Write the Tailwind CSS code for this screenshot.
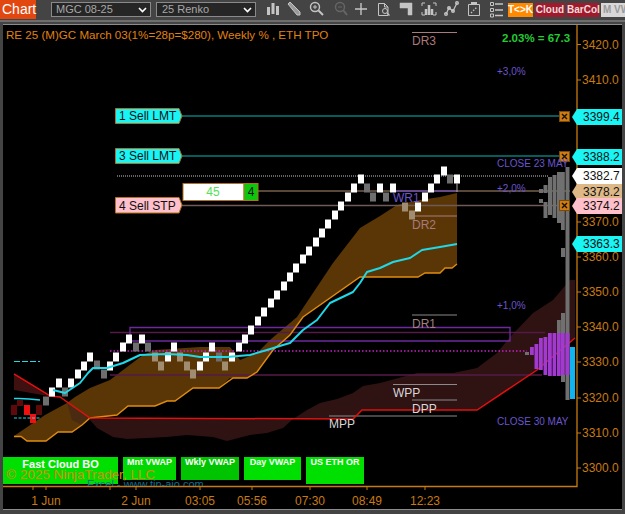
<!DOCTYPE html>
<html>
<head>
<meta charset="utf-8">
<script src="https://cdn.jsdelivr.net/npm/@tailwindcss/browser@4"></script>
</head>
<body class="m-0 w-[625px] h-[514px] overflow-hidden bg-[#444444] font-['Liberation_Sans',Arial,sans-serif] flex flex-col">
<header class="h-[22px] flex items-start shrink-0 relative border-b-2 border-[#6e6e6e]">
  <div class="w-[36px] h-[19px] shrink-0 bg-[#e2470f] text-white text-[14px] leading-[19px] pl-[2px]">Chart</div>
  <div class="ml-[15px] mt-[2px] w-[100px] h-[15px] shrink-0 bg-[#262626] border border-[#8a8a8a] text-[#a8a8a8] text-[11px] leading-[13px] pl-[4px] flex justify-between items-center pr-[3px]"><span>MGC 08-25</span>
    <svg width="9" height="6" viewBox="0 0 9 6"><path d="M1 1l3.500 3.500L8 1" fill="none" stroke="#fff" stroke-width="1.600"/></svg></div>
  <div class="ml-[5px] mt-[2px] w-[100px] h-[15px] shrink-0 bg-[#262626] border border-[#8a8a8a] text-[#a8a8a8] text-[11px] leading-[13px] pl-[5px] flex justify-between items-center pr-[3px]"><span>25 Renko</span>
    <svg width="9" height="6" viewBox="0 0 9 6"><path d="M1 1l3.500 3.500L8 1" fill="none" stroke="#fff" stroke-width="1.600"/></svg></div>
  <svg class="ml-[6px] shrink-0" width="246" height="20" viewBox="262 0 246 20" fill="none" stroke="#c4c4c4" stroke-width="1.400">
    <path d="M268.500 7v8M273 3v11M277.500 6v9" stroke-width="3"/>
    <path d="M288 4l2-2 10 10 0 3-3 0z" fill="#9a9a9a" stroke="#c4c4c4" stroke-width="1"/>
    <circle cx="315" cy="7" r="4.500"/><path d="M318.500 10.500l4.500 4.500" stroke-width="2"/><path d="M313 7h4M315 5v4" stroke-width="1"/>
    <circle cx="340" cy="7" r="4.500" stroke="#666"/><path d="M343.500 10.500l3.500 4.500" stroke="#666" stroke-width="2"/><path d="M338 7h4" stroke="#666" stroke-width="1"/>
    <path d="M355 9h12M361 3v12" />
    <path d="M378.500 3.500h6l3.500 3.500v8.500h-9.500zM384.500 3.500v3.500h3.500" stroke-width="1"/><circle cx="385" cy="11" r="2.500" stroke-width="1"/><path d="M387 13l2.500 2.500" stroke-width="1.200"/>
    <path d="M400 3h12v12h-4V8h-8z" fill="#c4c4c4" stroke-width="0.500"/>
    <path d="M422 6V3h3M436 6V3h-3M422 12v3h3M436 12v3h-3" stroke-width="1"/><path d="M426 15V9M429 15V5M432 15V9" stroke-width="2.500"/>
    <path d="M446 14l3-6 4 3 4-8" stroke-width="1.200"/><circle cx="446" cy="14" r="1.300"/><circle cx="449" cy="8" r="1.300"/><circle cx="453" cy="11" r="1.300"/><circle cx="457" cy="3" r="1.300"/>
    <path d="M468.500 4.500h11v11h-11z" stroke-width="1"/><path d="M471 3h6" stroke-width="2"/><path d="M471 13l6-6" stroke-width="1.300" stroke-dasharray="1.500 1.500"/>
    <path d="M490.500 2.500h3v3h-3zM490.500 8.500h3v3h-3zM490.500 14h3v3h-3z" stroke-width="1"/><path d="M495 4h8M495 10h8M495 15.500h8" stroke-width="1.500"/>
  </svg>
  <div class="mt-[3px] flex font-bold gap-[2px] shrink-0">
    <span class="w-[25px] h-[14px] bg-[#ff8a00] text-white text-center text-[10px] leading-[14px]">T&lt;&gt;K</span>
    <span class="w-[30px] h-[14px] bg-[#a11a2c] text-[#f2dcdc] text-center text-[10px] leading-[14px]">Cloud</span>
    <span class="w-[32px] h-[14px] bg-[#a11a2c] text-[#f2dcdc] text-center text-[10px] leading-[14px]">BarCol</span>
    <span class="w-[25px] h-[14px] bg-[#d8d8d8] text-[#9a9a9a] pl-[2px] text-[10px] leading-[14px] whitespace-nowrap overflow-hidden">M VW</span>
  </div>
</header>
<main class="relative ml-[3px] mt-[2px] w-[619px] h-[486px] bg-black">
<svg class="absolute left-0 top-0" width="619" height="486" viewBox="3 24 619 486" font-size="12">
  <defs><rect id="c" x="-3" y="-4.500" width="6" height="9"/></defs>
  <!-- maroon cloud -->
  <polygon fill="#2f1212" points="90,420 97,428 113,437 127,439 167,437 187,435 213,437 227,441 250,435 267,433 283,428 293,419 307,410 320,403 337,399 353,393 363,386 380,383 417,373 453,373 477,368 497,353 510,337 533,313 553,300 570,280 575,280 575,338 537,370 477,410 362,410 353,419 300,419 90,419"/>
  <polygon fill="#3f1010" points="14,375 14,390 48,396"/>
  <!-- brown cloud -->
  <polygon fill="#5a3606" points="14,436 45,415 67,403 75,397 90,388 110,380 127,367 143,355 155,350 200,347 230,347 240,360 257,353 270,340 297,317 333,263 360,228 380,216 397,205 420,200 440,197 457,193 457,264 452,268 445,268 440,273 425,273 418,277 360,277 303,317 290,335 273,350 257,372 247,378 230,378 219,388 193,388 175,401 167,401 155,406 128,406 117,415 90,418 82,425 72,432 58,432 46,441 27,441 21,436"/>
  <polygon fill="#4a2a10" points="67,403 90,418 82,425 72,420"/>
  <!-- level lines -->
  <g fill="none">
    <path d="M110 332.500H545M110 375H542" stroke="#561a4a" stroke-width="1.300"/>
    <path d="M130 341V327.500H510V341H130" stroke="#6d2a9e" stroke-width="1.300"/>
    <path d="M110 351H527" stroke="#c81fc8" stroke-width="1.500" stroke-dasharray="1.500 2"/>
    <path d="M117 176H548" stroke="#c8c8c8" stroke-dasharray="1 1"/>
    <path d="M182 116H560M182 156H560" stroke="#0a7a7a" stroke-width="1.300"/>
    <path d="M182 205.500H560" stroke="#6f5a58" stroke-width="1.300"/>
    <path d="M258 191H570" stroke="#75604a" stroke-width="1.300"/>
    <path d="M392 191H457" stroke="#6d4aa0" stroke-width="1.300"/>
    <path d="M412 32.500H457M412 216H457" stroke="#a97a7a"/>
    <path d="M412 315H457M393 384.500H457M412 400H457M329 416H457" stroke="#8a8a8a"/>
  </g>
  <!-- orange cloud edge -->
  <polyline fill="none" stroke="#e08c10" stroke-width="1.400" points="14,436.500 21,436.500 27,441 46,441 58,432 72,432 82,425 90,418 117,415 128,406 155,406 167,401 175,401 193,388 219,388 233,378 247,378 257,372 273,350 290,335 303,317 360,277 418,277 425,273 440,273 445,268 452,268 457,264"/>
  <!-- red line -->
  <polyline fill="none" stroke="#e01010" stroke-width="1.500" points="14,374 50,396 60,397 90,418 353,419 362,410 477,410 537,370 575,338"/>
  <!-- candles -->
  <g fill="#fff">
    <use href="#c" x="52" y="392"/><use href="#c" x="59" y="383"/><use href="#c" x="71" y="383"/><use href="#c" x="78" y="374"/><use href="#c" x="84" y="366"/><use href="#c" x="90" y="357"/><use href="#c" x="110" y="366"/><use href="#c" x="116" y="357"/><use href="#c" x="123" y="347"/><use href="#c" x="129" y="339"/><use href="#c" x="142" y="339"/><use href="#c" x="168" y="357"/><use href="#c" x="174" y="347"/><use href="#c" x="200" y="366"/><use href="#c" x="206" y="357"/><use href="#c" x="212" y="347"/><use href="#c" x="232" y="357"/><use href="#c" x="239" y="347"/><use href="#c" x="245" y="339"/><use href="#c" x="251" y="330"/><use href="#c" x="258" y="321"/><use href="#c" x="264" y="312"/><use href="#c" x="271" y="303"/><use href="#c" x="277" y="295"/><use href="#c" x="284" y="286"/><use href="#c" x="290" y="277"/><use href="#c" x="296" y="268"/><use href="#c" x="303" y="259"/><use href="#c" x="309" y="251"/><use href="#c" x="316" y="242"/><use href="#c" x="322" y="233"/><use href="#c" x="328" y="224"/><use href="#c" x="335" y="215"/><use href="#c" x="341" y="206"/><use href="#c" x="348" y="197"/><use href="#c" x="354" y="188"/><use href="#c" x="361" y="179"/><use href="#c" x="380" y="188"/><use href="#c" x="393" y="188"/><use href="#c" x="418" y="207"/><use href="#c" x="425" y="197"/><use href="#c" x="431" y="188"/><use href="#c" x="437" y="179"/><use href="#c" x="444" y="171"/><use href="#c" x="457" y="179"/>
  </g>
  <g fill="#6e6e6e">
    <use href="#c" x="46" y="401"/><use href="#c" x="65" y="392"/><use href="#c" x="97" y="365"/><use href="#c" x="104" y="374"/><use href="#c" x="136" y="347"/><use href="#c" x="148" y="347"/><use href="#c" x="219" y="357"/><use href="#c" x="367" y="188"/><use href="#c" x="373" y="197"/><use href="#c" x="386" y="197"/><use href="#c" x="450" y="179"/>
  </g>
  <g fill="#a08c70">
    <use href="#c" x="155" y="357"/><use href="#c" x="161" y="366"/><use href="#c" x="180" y="357"/><use href="#c" x="187" y="366"/><use href="#c" x="193" y="374"/><use href="#c" x="225" y="366"/><use href="#c" x="405" y="207"/><use href="#c" x="412" y="215"/>
  </g>
  <path d="M457 183V192" stroke="#aaa"/>
  <g fill="#5e0a0a"><rect x="17" y="400" width="6" height="6"/><rect x="11" y="405" width="6" height="10"/><rect x="36" y="405" width="6" height="10"/></g>
  <g fill="#f01010"><rect x="24" y="405" width="6" height="10"/><rect x="30" y="414" width="6" height="9"/></g>
  <!-- cyan -->
  <polyline fill="none" stroke="#1fd8e8" stroke-width="2" stroke-linejoin="round" points="53,390 65,393 80,383 88,373 93,368 107,368 123,363 140,355 167,354 187,355 200,357 227,357 250,355 267,350 283,345 290,343 303,330 317,320 330,303 353,292 360,283 367,272 380,268 393,262 410,258 422,250 440,247 457,244"/>
  <path d="M14 361.500H40" stroke="#1fd8e8" stroke-width="1.200" stroke-dasharray="6 2"/>
  <path d="M14 398.500Q26 398 40 400" stroke="#1fd8e8" stroke-width="1.500" fill="none"/>
  <path d="M14 418H40" stroke="#1fd8e8" stroke-width="1.200" stroke-dasharray="3 1.500"/>
  <!-- volume profile -->
  <g fill="#707070">
    <rect x="539" y="189" width="4" height="4"/><rect x="539" y="199" width="4" height="4"/>
    <rect x="543.500" y="185" width="4" height="8"/><rect x="543.500" y="202" width="4" height="16"/>
    <rect x="548" y="177" width="4" height="38"/><rect x="552.500" y="175" width="4" height="43"/>
    <rect x="557" y="172" width="4" height="51"/><rect x="561" y="172" width="3.800" height="58"/>
    <rect x="561" y="248" width="4" height="9"/><rect x="565.500" y="167" width="4" height="233"/>
    <rect x="561" y="313" width="4" height="20"/><rect x="557" y="320" width="3.800" height="13"/>
    <rect x="561" y="375" width="4" height="7"/><rect x="525" y="352" width="4" height="3"/>
  </g>
  <g fill="#a23ad0">
    <rect x="530" y="347" width="3.800" height="8"/><rect x="534.500" y="344" width="3.800" height="25"/><rect x="539" y="338" width="3.800" height="32"/><rect x="543.500" y="337" width="3.800" height="38"/><rect x="548" y="333" width="3.800" height="43"/><rect x="552.500" y="333" width="3.800" height="43"/><rect x="557" y="333" width="3.800" height="43"/><rect x="561" y="333" width="3.800" height="42"/><rect x="565.500" y="333" width="4" height="42"/>
  </g>
  <rect x="570" y="347" width="5" height="52" fill="#12b4ee"/>
  <!-- X markers -->
  <g fill="#d07a10" stroke="#7a4a08"><rect x="559.500" y="111.500" width="10" height="10"/><rect x="559.500" y="151.500" width="10" height="10"/><rect x="559.500" y="200.500" width="10" height="10"/></g>
  <path d="M562 114l5 5m0-5l-5 5M562 154l5 5m0-5l-5 5M562 203l5 5m0-5l-5 5" stroke="#111" stroke-width="1.300"/>
  <!-- text labels -->
  <g font-size="12">
    <text x="412" y="45" fill="#a97a7a">DR3</text><text x="412" y="229" fill="#a97a7a">DR2</text><text x="412" y="328" fill="#a08080">DR1</text>
    <text x="393" y="202" fill="#6b55cc" font-size="12">WR1</text>
    <text x="393" y="397" fill="#d8d8d8">WPP</text><text x="412" y="413" fill="#d8d8d8">DPP</text><text x="329" y="428" fill="#d8d8d8">MPP</text>
  </g>
  <g font-size="10" fill="#6a55cc">
    <text x="497" y="75">+3,0%</text><text x="497" y="167">CLOSE 23 MAY</text><text x="497" y="192">+2,0%</text><text x="497" y="309">+1,0%</text><text x="497" y="425">CLOSE 30 MAY</text>
  </g>
  <text x="6" y="39" fill="#e08210" font-size="11.600">RE 25 (M)GC March 03(1%=28p=$280), Weekly % , ETH TPO</text>
  <text x="502" y="42" fill="#22cc33" font-size="11.500" font-weight="700">2.03% = 67.3</text>
  <!-- frame and axes -->
  <path d="M3 24.500H622M3 509.500H622" fill="none" stroke="#8c8c8c"/>
  <path d="M577 25V486.500H3" fill="none" stroke="#c87a10" stroke-width="1.300"/>
  <path d="M577 44.500h4M577 80h4M577 222h4M577 257h4M577 292h4M577 327h4M577 362h4M577 398h4M577 433h4M577 468h4" stroke="#c87a10" stroke-width="1.200"/>
  <path d="M33 486v4M46 486v4M110 486v4M136 486v4M200 486v4M252 486v4M310 486v4M367 486v4M425 486v4" stroke="#c87a10"/>
  <g fill="#c87a10" font-size="12">
    <text x="582" y="49">3420.0</text><text x="582" y="84">3410.0</text><text x="582" y="226">3370.0</text><text x="582" y="261">3360.0</text><text x="582" y="296">3350.0</text><text x="582" y="331">3340.0</text><text x="582" y="366">3330.0</text><text x="582" y="402">3320.0</text><text x="582" y="437">3310.0</text><text x="582" y="472">3300.0</text>
    <g text-anchor="middle"><text x="46" y="505">1 Jun</text><text x="136" y="505">2 Jun</text><text x="200" y="505">03:05</text><text x="252" y="505">05:56</text><text x="310" y="505">07:30</text><text x="367" y="505">08:49</text><text x="425" y="505">12:23</text></g>
  </g>
  <!-- price flags -->
  <g font-size="12" fill="#111">
    <polygon points="572,117 577,109 623,109 623,125 577,125" fill="#19f5f5"/><text x="583" y="121">3399.4</text>
    <polygon points="572,157 577,149 623,149 623,165 577,165" fill="#19f5f5"/><text x="583" y="161">3388.2</text>
    <polygon points="572,176 577,168 623,168 623,184 577,184" fill="#fff"/><text x="583" y="180">3382.7</text>
    <polygon points="572,192 577,184 623,184 623,200 577,200" fill="#deb887"/><text x="583" y="196">3378.2</text>
    <polygon points="572,206 577,198 623,198 623,214 577,214" fill="#ffc0cb"/><text x="583" y="210">3374.2</text>
    <polygon points="572,244 577,236 623,236 623,252 577,252" fill="#19f5f5"/><text x="583" y="248">3363.3</text>
    <polygon points="115.500,108.500 179,108.500 182,116 179,123.500 115.500,123.500" fill="#19f5f5" stroke="#b5701a"/><text x="119" y="120">1 Sell LMT</text>
    <polygon points="115.500,148.500 179,148.500 182,156 179,163.500 115.500,163.500" fill="#19f5f5" stroke="#b5701a"/><text x="119" y="160">3 Sell LMT</text>
    <polygon points="115.500,197.500 179,197.500 182,205 179,213 115.500,213" fill="#ffc0cb" stroke="#b5701a"/><text x="119" y="209.500">4 Sell STP</text>
  </g>
  <rect x="183" y="183.500" width="61" height="17" fill="#fff" stroke="#b5701a"/>
  <rect x="244" y="183.500" width="14" height="17" fill="#0cc80c" stroke="#b5701a"/>
  <text x="213" y="196" fill="#55e055" text-anchor="middle">45</text><text x="251" y="196" fill="#111" text-anchor="middle">4</text>
</svg>
<div class="absolute left-0 top-[433px] w-[361px] h-[27px] flex items-start gap-[5px]">
  <div class="w-[115px] h-[27px] bg-[#00e000] text-white text-[11px] font-bold text-center leading-[14px]">Fast Cloud BO</div>
  <div class="w-[53px] h-[23px] bg-[#00d800] text-white text-[9px] font-bold text-center leading-[10px]">Mnt VWAP</div>
  <div class="w-[58px] h-[23px] bg-[#00c400] text-white text-[9px] font-bold text-center leading-[10px]">Wkly VWAP</div>
  <div class="w-[57px] h-[23px] bg-[#00e000] text-white text-[9px] font-bold text-center leading-[10px]">Day VWAP</div>
  <div class="w-[58px] h-[27px] bg-[#00e000] text-white text-[9px] font-bold text-center leading-[10px]">US ETH OR</div>
</div>
<div class="absolute left-[3px] top-[443px] text-[#d88a10] text-[13.500px] leading-[16px] whitespace-nowrap">© 2025 NinjaTrader, LLC</div>
<div class="absolute left-[84px] top-[454px] text-[#0f6f8f] text-[11px] leading-[12px] h-[8px] overflow-hidden whitespace-nowrap">Excel - www.tin-aio.com</div>
</main>
</body>
</html>
